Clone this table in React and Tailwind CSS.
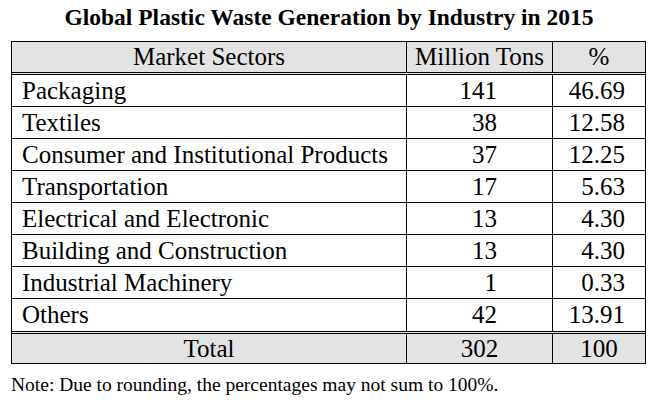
const rows = [
  { sector: 'Packaging', tons: '141', pct: '46.69' },
  { sector: 'Textiles', tons: '38', pct: '12.58' },
  { sector: 'Consumer and Institutional Products', tons: '37', pct: '12.25' },
  { sector: 'Transportation', tons: '17', pct: '5.63' },
  { sector: 'Electrical and Electronic', tons: '13', pct: '4.30' },
  { sector: 'Building and Construction', tons: '13', pct: '4.30' },
  { sector: 'Industrial Machinery', tons: '1', pct: '0.33' },
  { sector: 'Others', tons: '42', pct: '13.91' },
]

const App = () => {
  return (
    <div className="w-[658px] h-[403px] bg-white text-black font-['Liberation_Serif',serif] overflow-hidden">
      <h1 className="pt-[3px] text-center text-[23.5px] font-bold leading-[28px]">
        Global Plastic Waste Generation by Industry in 2015
      </h1>

      <div className="ml-[11px] mt-[10px] w-[635px] border border-black text-[25px] leading-[31px]">
        {/* Header */}
        <div className="grid grid-cols-[394px_146px_93px] h-[33px] bg-[#e3e3e3] border-b-[3px] border-double border-black">
          <div className="text-center leading-[30px]">Market Sectors</div>
          <div className="border-l border-black text-center leading-[30px]">Million Tons</div>
          <div className="border-l border-black text-center leading-[30px]">%</div>
        </div>

        {/* Body */}
        {rows.map((row, i) => (
          <div
            key={row.sector}
            className={`grid grid-cols-[394px_146px_93px] ${
              i < rows.length - 1 ? 'h-[32px] border-b border-black' : 'h-[32px]'
            }`}
          >
            <div className="pl-[10px] whitespace-nowrap">{row.sector}</div>
            <div className="border-l border-black text-right pr-[55px]">{row.tons}</div>
            <div className="border-l border-black text-right pr-[20px]">{row.pct}</div>
          </div>
        ))}

        {/* Total */}
        <div className="grid grid-cols-[394px_146px_93px] h-[32px] bg-[#e3e3e3] border-t-[3px] border-double border-black">
          <div className="text-center leading-[29px]">Total</div>
          <div className="border-l border-black text-center leading-[29px]">302</div>
          <div className="border-l border-black text-center leading-[29px]">100</div>
        </div>
      </div>

      <p className="ml-[11px] mt-[9px] text-[19.5px] leading-[24px]">
        Note: Due to rounding, the percentages may not sum to 100%.
      </p>
    </div>
  )
}

export default App
